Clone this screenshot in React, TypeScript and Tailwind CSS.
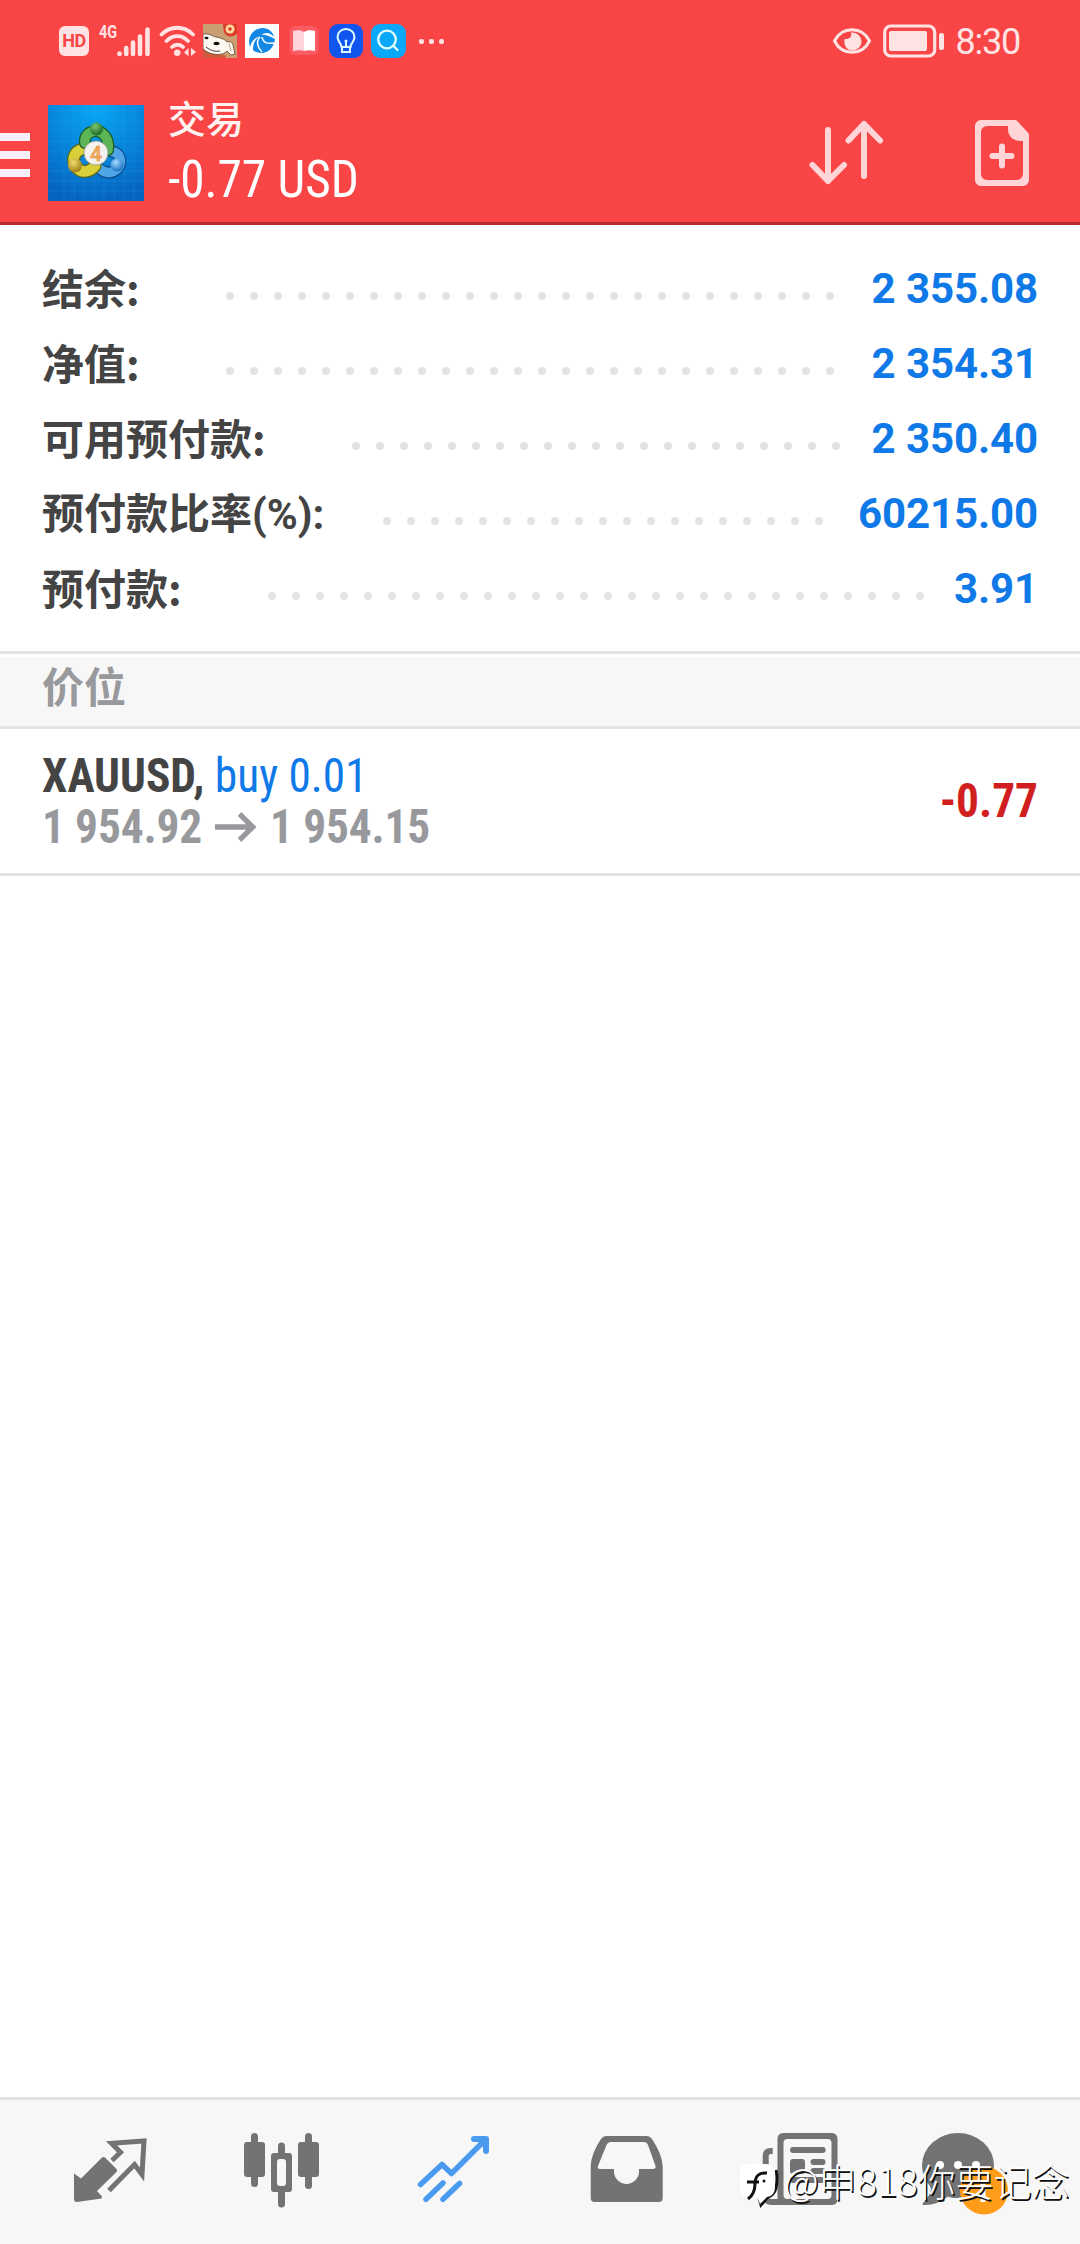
import type { ReactNode } from 'react';

interface AccountRow {
    label: string;
    value: string;
    labelClass: string;
    dots: number;
}

const accountRows: AccountRow[] = [
    { label: '结余:', value: '2 355.08', labelClass: "w-[184px] mb-[6px] font-['Noto_Sans_CJK_SC',sans-serif]", dots: 26 },
    { label: '净值:', value: '2 354.31', labelClass: "w-[184px] mb-[6px] font-['Noto_Sans_CJK_SC',sans-serif]", dots: 26 },
    { label: '可用预付款:', value: '2 350.40', labelClass: "w-[310px] mb-[6px] font-['Noto_Sans_CJK_SC',sans-serif]", dots: 21 },
    { label: '预付款比率(%):', value: '60215.00', labelClass: 'w-[341px]', dots: 19 },
    { label: '预付款:', value: '3.91', labelClass: "w-[226px] mb-[6px] font-['Noto_Sans_CJK_SC',sans-serif]", dots: 28 },
];

const StatusBar = () => (
    <div className="flex h-[82px] items-center pl-[59px] pr-[60px] text-[#ffe3e3]">
        <div className="flex h-[30px] w-[30px] items-center justify-center rounded-[6px] bg-[#ffe3e3]">
            <span className="text-[18px] font-bold leading-none tracking-[-0.5px] text-[#fa4547]">HD</span>
        </div>

        {/* Signal */}
        <div className="ml-[10px] flex h-[34px]">
            <span className="block w-[18px] origin-top-left scale-x-[0.76] text-[19px] font-bold leading-[16px]">4G</span>
            <svg width="34" height="34" viewBox="0 0 34 34" stroke="currentColor" strokeWidth="4.6" strokeLinecap="round">
                <path d="M2.5 29.5v.5M9.2 24v6M16 18.500v11.500M23 12.500V30M30.500 5.500V30" />
            </svg>
        </div>

        {/* Wi-Fi */}
        <svg className="ml-[8px]" width="38" height="34" viewBox="0 0 38 34" fill="none" stroke="currentColor" strokeWidth="3.8" strokeLinecap="round">
            <path d="M2.500 10.500C11.500 1.500 25 1.500 34 10.500M7.500 17C14 10.500 22.500 10.500 29 17M13 23C16 20 21 20 24 23" />
            <circle cx="18.200" cy="28.800" r="3.200" fill="currentColor" stroke="none" />
            <path d="M29.500 24v8l-4.500-3.200zM32 24v8l5-4z" fill="currentColor" stroke="none" />
        </svg>

        {/* Notification icons */}
        <svg className="ml-[6px]" width="34" height="34" viewBox="0 0 34 34">
            <rect width="34" height="34" fill="#c99f72" />
            <path d="M0 24c6 5 14 7 22 7l1 3H0z" fill="#cf5a3c" />
            <path d="M0 10c6-1 9 2 13 3 5 1 9 2 11 5 3-1 5 0 6 3l2 9-4 1-4-4c-4 5-16 5-24-2z" fill="#fdf8f0" stroke="#5e4632" strokeWidth="0.800" />
            <path d="M26 19l2 8" stroke="#b9a48c" strokeWidth="1" />
            <ellipse cx="3.500" cy="14" rx="2" ry="1.300" fill="#111" />
            <ellipse cx="13.500" cy="19.500" rx="3" ry="1.700" fill="#111" />
            <path d="M3 23c4 3 8 5 14 4" fill="none" stroke="#222" strokeWidth="0.900" />
            <path d="M20 0h14v10q-7 5-12 0-2-4-2-10z" fill="#dc3d28" />
            <circle cx="27" cy="5" r="4.500" fill="#ffd7a0" />
            <circle cx="27" cy="5" r="1.800" fill="#d93a25" />
        </svg>
        <svg className="ml-[8px]" width="34" height="34" viewBox="0 0 34 34">
            <rect width="34" height="34" fill="#fff" />
            <path d="M5 23C2 14 7 5 17 4c7 0 11 4 12 9-4-5-9-5-13-2 6-1 9 2 14 4-1 8-6 14-14 14-3 0-6-1-8-3 0-6 2-11 7-14-6 2-9 6-10 11z" fill="#1287e6" />
            <path d="M15 13c-4 4-3 10 2 15M17 13c1 6 5 7 12 6" fill="none" stroke="#fff" strokeWidth="1.500" />
        </svg>
        <svg className="ml-[10px]" width="30" height="30" viewBox="0 0 30 30">
            <rect x="0.500" width="29" height="29" rx="6" fill="#fb5b62" />
            <path d="M4 5c4-1 8-1 11 1v19c-3-1-7-1-11 0z" fill="#ffd3da" />
            <path d="M15 6c3-2 7-2 11-1v20c-4-1-8-1-11 0z" fill="#fff" />
        </svg>
        <svg className="ml-[10px]" width="34" height="34" viewBox="0 0 34 34" fill="none" stroke="#dffcff" strokeWidth="2">
            <rect width="34" height="34" rx="9" fill="#1055ee" stroke="none" />
            <path d="M12.500 23c0-4-4-5-4-10a8.500 8 0 0 1 17 0c0 5-4 6-4 10zM13 23v5h8v-5M17 17v6" />
            <circle cx="17" cy="17" r="1.500" fill="#dffcff" stroke="none" />
        </svg>
        <svg className="ml-[8px]" width="35" height="34" viewBox="0 0 35 34" fill="none" stroke="#e2ffff" strokeWidth="2.300" strokeLinecap="round">
            <rect width="35" height="34" rx="9" fill="#0ba8fa" stroke="none" />
            <circle cx="16" cy="15.500" r="8.800" />
            <path d="m22.500 22 4 4" />
        </svg>
        <div className="ml-[13px] flex gap-[5px]">
            <span className="h-[5px] w-[5px] rounded-[2px] bg-[#ffe3e3]" />
            <span className="h-[5px] w-[5px] rounded-[2px] bg-[#ffe3e3]" />
            <span className="h-[5px] w-[5px] rounded-[2px] bg-[#ffe3e3]" />
        </div>

        <div className="ml-auto flex items-center">
            <svg width="38" height="26" viewBox="0 0 38 26">
                <path d="M1.500 13C9-2 29-2 36.500 13 29 28 9 28 1.500 13z" fill="none" stroke="currentColor" strokeWidth="3" strokeLinejoin="round" />
                <path d="M18 4.500c1 4-1 7-6.500 6.500-1 7 3 11.500 8 11.500a9 9 0 0 0 0-18z" fill="currentColor" />
            </svg>
            <svg className="ml-[12px]" width="62" height="34" viewBox="0 0 62 34">
                <rect x="1.700" y="2" width="50" height="30" rx="6" fill="none" stroke="currentColor" strokeWidth="3.200" />
                <rect x="6" y="7" width="38" height="20" rx="2" fill="currentColor" />
                <rect x="56" y="9" width="5" height="17" rx="2" fill="currentColor" />
            </svg>
            <span className="ml-[10px] mt-[2px] text-[36px] leading-none tracking-[-1.200px]">8:30</span>
        </div>
    </div>
);

const AppLogo = () => (
    <svg className="ml-[18px] shrink-0" width="96" height="96" viewBox="0 0 96 96">
        <defs>
            <radialGradient id="sky" cx="0.500" cy="0" r="1">
                <stop offset="0" stopColor="#08a8f6" />
                <stop offset="1" stopColor="#0564c0" />
            </radialGradient>
            <radialGradient id="green" cx="0.400" cy="0.300" r="0.700">
                <stop offset="0" stopColor="#7cc46c" />
                <stop offset="1" stopColor="#1d6b2a" />
            </radialGradient>
            <radialGradient id="gold" cx="0.400" cy="0.300" r="0.700">
                <stop offset="0" stopColor="#f3de70" />
                <stop offset="1" stopColor="#9c7d12" />
            </radialGradient>
            <radialGradient id="azure" cx="0.400" cy="0.300" r="0.700">
                <stop offset="0" stopColor="#a4dcff" />
                <stop offset="1" stopColor="#1a6fc0" />
            </radialGradient>
        </defs>
        <rect width="96" height="96" fill="url(#sky)" />
        <path d="M16 0v96M26 0v96M36 0v96M46 0v96M56 0v96M66 0v96M76 0v96M86 0v96M0 16h96M0 26h96M0 36h96M0 46h96M0 56h96M0 66h96M0 76h96M0 86h96" stroke="#39b5f5" strokeOpacity="0.250" strokeWidth="0.700" />
        <g fill="none" strokeLinecap="round">
            <path d="M62 46c10 1 13 10 8 17-6 7-16 6-24-5" stroke="#0d4d8e" strokeWidth="12" />
            <path d="M62 46c10 1 13 10 8 17-6 7-16 6-24-5" stroke="#4ea6e6" strokeWidth="9.500" />
            <path d="M35 44c-9 2-12 11-7 18 6 7 14 5 19-1" stroke="#5f6b14" strokeWidth="13" />
            <path d="M35 44c-9 2-12 11-7 18 6 7 14 5 19-1" stroke="#d8cf3a" strokeWidth="10.500" />
            <path d="M37 38c-1-8 5-12 11-12s14 7 12 19" stroke="#175c25" strokeWidth="12" />
            <path d="M37 38c-1-8 5-12 11-12s14 7 12 19" stroke="#5bb555" strokeWidth="9.500" />
        </g>
        <circle cx="48.500" cy="24" r="6.500" fill="url(#green)" />
        <circle cx="27" cy="60.500" r="7" fill="url(#gold)" />
        <circle cx="69" cy="60" r="6.500" fill="url(#azure)" />
        <circle cx="48" cy="48" r="12" fill="#f4f1ee" stroke="#8a9a92" strokeWidth="0.800" />
        <text x="48" y="55.500" textAnchor="middle" fontFamily="Roboto" fontSize="21" fontWeight="500" fill="#f3b06a" stroke="#e58a32" strokeWidth="0.500">4</text>
    </svg>
);

const Header = () => (
    <header className="bg-[#fa4547]">
        <StatusBar />
        <div className="flex h-[143px] items-center border-b-3 border-[#b52c2f] pr-[51px] pt-[2px]">
            <div className="mt-[4px] flex w-[30px] flex-col gap-[10px]">
                <span className="h-[8px] bg-[#f7f0fa]" />
                <span className="h-[8px] bg-[#f7f0fa]" />
                <span className="h-[8px] bg-[#f7f0fa]" />
            </div>
            <AppLogo />
            <div className="ml-[24px] text-white">
                <div className="text-[38px] font-medium leading-[54px] text-[#fff3f2]">交易</div>
                <div className="origin-left scale-x-[0.966] font-['Roboto_Condensed',Roboto] text-[51px] leading-[66px] [font-stretch:condensed]">
                    -0.77 USD
                </div>
            </div>
            <svg className="ml-auto" width="74" height="66" viewBox="0 0 74 66" fill="none" stroke="#ffd5d7" strokeWidth="6" strokeLinecap="round" strokeLinejoin="round">
                <path d="M19 10v51M3.500 45 19 61l16-16M55 56V4M39.500 20.500 55 4l16 16.500" />
            </svg>
            <svg className="ml-[92px]" width="54" height="66" viewBox="0 0 54 66">
                <path d="M6 3h34l11 12v45a3 3 0 0 1-3 3H6a3 3 0 0 1-3-3V6a3 3 0 0 1 3-3z" fill="none" stroke="#ffd5d7" strokeWidth="6" strokeLinejoin="round" />
                <path d="M6 12a6 6 0 0 1 6-6H6zM6 54v6h6a6 6 0 0 1-6-6zM48 54v6h-6a6 6 0 0 0 6-6z" fill="#ffd5d7" />
                <path d="M33 4h8l11 12v5h-6c-8 0-13-5-13-12z" fill="#ffd5d7" />
                <path d="M27 26.500v19M17.500 36h19" stroke="#ffd5d7" strokeWidth="6" strokeLinecap="round" />
            </svg>
        </div>
    </header>
);

const AccountLine = ({ label, value, labelClass, dots }: AccountRow) => (
    <div className="flex h-[75px] items-center">
        <span className={`${labelClass} shrink-0 whitespace-nowrap text-[42px] font-bold leading-none text-[#444]`}>{label}</span>
        <div className="mt-[12px] flex gap-4">
            {Array.from({ length: dots }, (_, i) => (
                <span key={i} className="h-2 w-2 rounded-full bg-[#e3e3e3]" />
            ))}
        </div>
        <span className="mb-[2px] ml-auto whitespace-nowrap text-[42px] font-bold leading-none tracking-[-0.100px] text-[#0f79e8]">{value}</span>
    </div>
);

const NavIcon = ({ children, color = 'text-[#737373]' }: { children: ReactNode; color?: string }) => (
    <div className={`flex justify-center ${color}`}>
        <svg className="overflow-visible" width="96" height="96" viewBox="0 0 96 96" fill="currentColor">
            {children}
        </svg>
    </div>
);

const BottomNav = () => (
    <nav className="relative grid h-[147px] grid-cols-6 border-t-3 border-[#e4e4e4] bg-[#f7f7f7] px-6 pt-[21px]">
        {/* Quotes */}
        <NavIcon>
            <path d="M12 52.500 19 57.500 39.500 37q2-2 4 0L54 47.500q2 2 0 4L35 70l5 5.500-.5 2L15 81q-3 0-3-3z" />
            <path d="m50 39.500 8.500-8.200-9-9L82 20l-2 33.500L72.500 43.500 47 69.500" fill="none" stroke="currentColor" strokeWidth="5" />
        </NavIcon>
        {/* Chart */}
        <NavIcon>
            <rect x="10" y="21" width="21" height="35" rx="3" />
            <rect x="17" y="12" width="7" height="54" rx="3.500" />
            <path fillRule="evenodd" d="M40 32h15a3 3 0 0 1 3 3v33a3 3 0 0 1-3 3H40a3 3 0 0 1-3-3V35a3 3 0 0 1 3-3zm6 6a3 3 0 0 0-3 3v21a3 3 0 0 0 3 3h3a3 3 0 0 0 3-3V41a3 3 0 0 0-3-3z" />
            <path d="M44 32v-7a3.500 3.500 0 0 1 7 0v7zM44 71v12a3.500 3.500 0 0 0 7 0V71z" />
            <rect x="64" y="21" width="21" height="35" rx="3" />
            <rect x="71" y="12" width="7" height="56" rx="3.500" />
        </NavIcon>
        {/* Trade */}
        <NavIcon color="text-[#4a9af0]">
            <g fill="none" stroke="currentColor" strokeWidth="5.500" strokeLinecap="round" strokeLinejoin="round">
                <path d="M14.500 63.500 36 43.500l9.500 9L79 19" />
                <path d="M68 18h12v12" strokeWidth="6" />
                <path d="m20 78.300 17-16.300M37 78.300 53.500 62.500" />
            </g>
            <path d="M74 17h8v8l-5 1-5-5z" />
        </NavIcon>
        {/* History */}
        <NavIcon>
            <path fillRule="evenodd" d="M28 15h41q3 0 5 3 10 15 10.700 27v32q0 4-4 4h-64q-4 0-4-4V45Q13 33 23 18q2-3 5-3zm5 6q-3 0-4.500 3L20 45q-1 3 2 3h14v2.500a12.500 12.500 0 0 0 25 0V48h14q3 0 2.500-3L70 24q-1-3-4.500-3z" />
        </NavIcon>
        {/* News */}
        <NavIcon>
            <path d="M22.700 30h-2q-5 0-5 5v40q0 6 6 6h12" fill="none" stroke="currentColor" strokeWidth="6" />
            <path fillRule="evenodd" d="M33 12h49a5.500 5.500 0 0 1 5.500 5.500v61A5.500 5.500 0 0 1 82 84H33a5.500 5.500 0 0 1-5.500-5.500v-61A5.500 5.500 0 0 1 33 12zm4.500 6a4 4 0 0 0-4 4v52a4 4 0 0 0 4 4h40a4 4 0 0 0 4-4V22a4 4 0 0 0-4-4z" />
            <rect x="40" y="26" width="35.700" height="6" rx="3" />
            <rect x="40" y="38" width="15" height="15" rx="3" />
            <rect x="60.500" y="38" width="15" height="6" rx="3" />
            <rect x="60.500" y="47" width="15" height="6" rx="3" />
            <rect x="40" y="56" width="35.700" height="6" rx="3" />
        </NavIcon>
        {/* Messages */}
        <NavIcon>
            <path d="M6 60h30v17q-6 0-10-1.500Q14 85 1 84q-1-1 0-2 7-7 8-14z" />
            <ellipse cx="36" cy="44.500" rx="36" ry="32.500" />
            <g fill="#fff">
                <circle cx="18" cy="44" r="4" />
                <circle cx="36" cy="44" r="4" />
                <circle cx="54" cy="44" r="4" />
            </g>
            <circle cx="62" cy="69.500" r="24" fill="#ff9c1a" />
            <path d="M61 60v21" stroke="#fff" strokeWidth="5" />
        </NavIcon>

        {/* Author tag laid over the bar */}
        <div className="absolute left-[738px] top-[60px] flex text-white">
            <svg width="42" height="48" viewBox="0 0 42 48">
                <path d="M38 10q2 8 0 18-2 7-8 9l-7 8-2-7" fill="none" stroke="#111" strokeWidth="3" />
                <path d="M11 4h17q9 0 9 9v14q0 9-8 10l-7 7-3-7h-8q-9 0-9-9V13q0-9 9-9z" fill="#fff" />
                <path d="M10 39q7-5 7-15 0-12 12-11M9 22h12" fill="none" stroke="#111" strokeWidth="3" />
                <circle cx="26" cy="21" r="1.500" fill="#111" />
            </svg>
            <span className="ml-[4px] mt-[-2px] whitespace-nowrap font-['Noto_Sans_CJK_SC',sans-serif] text-[38px] font-light leading-[44px] [text-shadow:1.5px_1.5px_0.5px_#111]">
                @申818你要记念
            </span>
        </div>
    </nav>
);

export default function App() {
    return (
        <div className="flex h-[2244px] w-[1080px] flex-col overflow-hidden bg-white font-[Roboto,'Noto_Sans_CJK_SC',sans-serif]">
            <Header />

            <section className="h-[426px] px-[42px] pt-[27px]">
                {accountRows.map((row) => (
                    <AccountLine key={row.label} {...row} />
                ))}
            </section>

            <div className="h-[78px] border-y-3 border-[#e4e4e4] bg-[#f7f7f7]">
                <div className="h-[3px] bg-white" />
                <h2 className="px-[42px] text-[42px] font-bold leading-[64px] text-[#98999c]">价位</h2>
            </div>

            {/* Open position */}
            <div className="flex h-[147px] items-center justify-between border-b-3 border-[#e4e4e4] px-[42px] font-['Roboto_Condensed',Roboto] text-[48px] font-bold [font-stretch:condensed]">
                <div className="origin-left scale-x-[0.945] whitespace-nowrap leading-[51px]">
                    <div className="text-[#444]">
                        XAUUSD, <span className="font-normal text-[#0f79e8]">buy 0.01</span>
                    </div>
                    <div className="flex items-center tracking-[-0.150px] text-[#98999c]">
                        1 954.92
                        <svg className="mx-[14px]" width="44" height="30" viewBox="0 0 44 30" fill="none" stroke="currentColor" strokeWidth="5.500">
                            <path d="M0 15h40M26 2l14 13-14 13" />
                        </svg>
                        1 954.15
                    </div>
                </div>
                <span className="origin-right scale-x-[0.945] text-[#d11f1f]">-0.77</span>
            </div>

            <div className="flex-1" />
            <BottomNav />
        </div>
    );
}
